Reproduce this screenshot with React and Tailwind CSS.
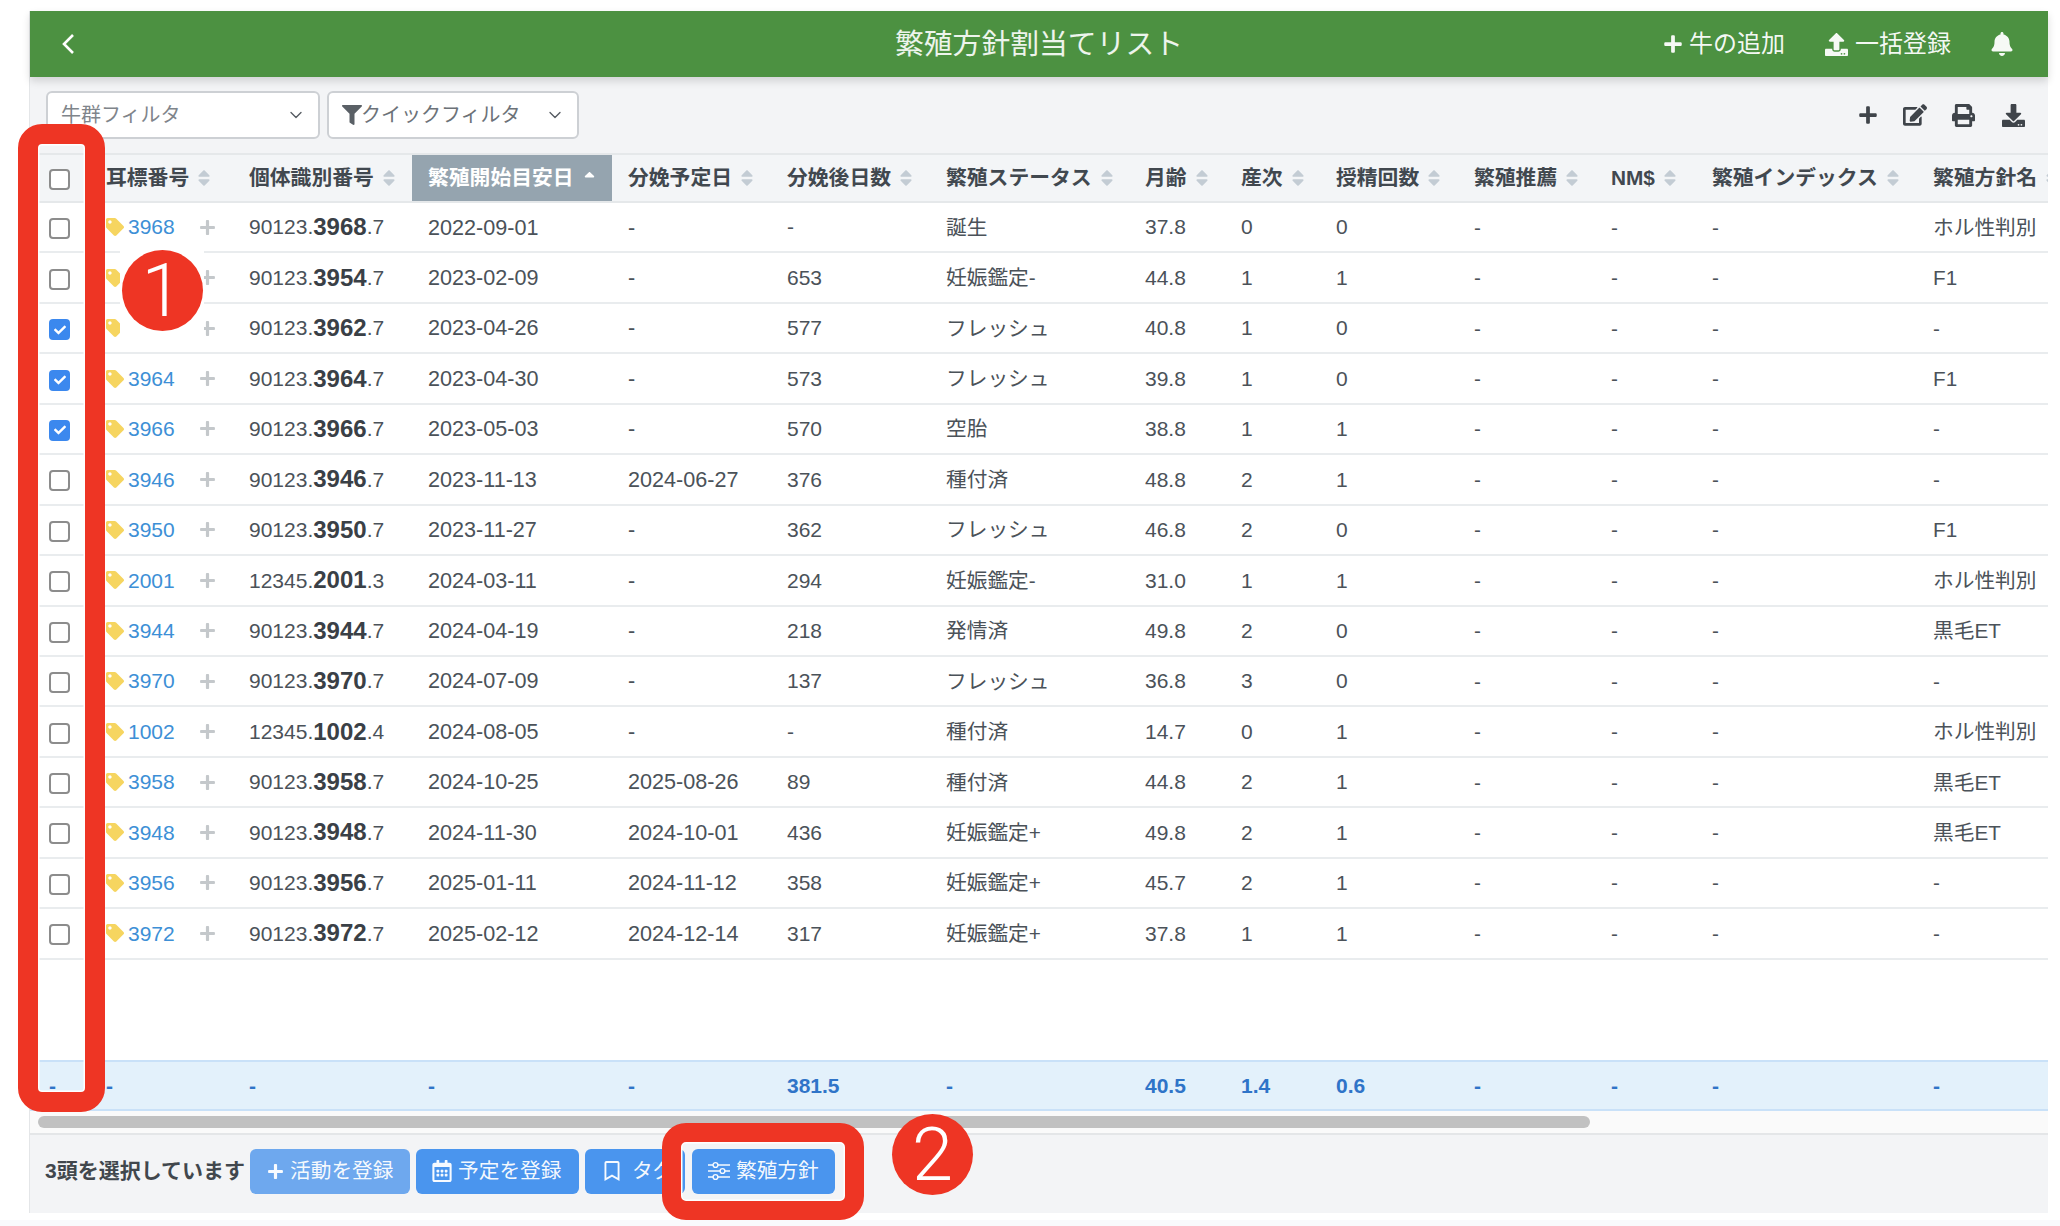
import { FaPlus, FaUpload, FaBell, FaFilter, FaEdit, FaPrint, FaDownload, FaTag, FaSort, FaSortUp, FaCheck, FaRegCalendarAlt, FaRegBookmark } from "react-icons/fa";
import { ChevronDown } from "lucide-react";

const cols = "grid grid-cols-[60px_143px_179px_200px_159px_159px_199px_96px_95px_138px_137px_101px_221px_183px] w-[2070px]";

const headers = ["耳標番号", "個体識別番号", "繁殖開始目安日", "分娩予定日", "分娩後日数", "繁殖ステータス", "月齢", "産次", "授精回数", "繁殖推薦", "NM$", "繁殖インデックス", "繁殖方針名"];

const cows = [
  ["3968", "90123", "7", "2022-09-01", "-", "-", "誕生", "37.8", "0", "0", "ホル性判別"],
  ["3954", "90123", "7", "2023-02-09", "-", "653", "妊娠鑑定-", "44.8", "1", "1", "F1"],
  ["3962", "90123", "7", "2023-04-26", "-", "577", "フレッシュ", "40.8", "1", "0", "-"],
  ["3964", "90123", "7", "2023-04-30", "-", "573", "フレッシュ", "39.8", "1", "0", "F1"],
  ["3966", "90123", "7", "2023-05-03", "-", "570", "空胎", "38.8", "1", "1", "-"],
  ["3946", "90123", "7", "2023-11-13", "2024-06-27", "376", "種付済", "48.8", "2", "1", "-"],
  ["3950", "90123", "7", "2023-11-27", "-", "362", "フレッシュ", "46.8", "2", "0", "F1"],
  ["2001", "12345", "3", "2024-03-11", "-", "294", "妊娠鑑定-", "31.0", "1", "1", "ホル性判別"],
  ["3944", "90123", "7", "2024-04-19", "-", "218", "発情済", "49.8", "2", "0", "黒毛ET"],
  ["3970", "90123", "7", "2024-07-09", "-", "137", "フレッシュ", "36.8", "3", "0", "-"],
  ["1002", "12345", "4", "2024-08-05", "-", "-", "種付済", "14.7", "0", "1", "ホル性判別"],
  ["3958", "90123", "7", "2024-10-25", "2025-08-26", "89", "種付済", "44.8", "2", "1", "黒毛ET"],
  ["3948", "90123", "7", "2024-11-30", "2024-10-01", "436", "妊娠鑑定+", "49.8", "2", "1", "黒毛ET"],
  ["3956", "90123", "7", "2025-01-11", "2024-11-12", "358", "妊娠鑑定+", "45.7", "2", "1", "-"],
  ["3972", "90123", "7", "2025-02-12", "2024-12-14", "317", "妊娠鑑定+", "37.8", "1", "1", "-"],
];

const totals = ["-", "-", "-", "-", "-", "381.5", "-", "40.5", "1.4", "0.6", "-", "-", "-", "-"];

function Check({ on }) {
  if (on) {
    return (
      <div className="w-[21px] h-[21px] rounded-[4px] bg-[#3b88ee] flex items-center justify-center text-white">
        <FaCheck size={12} />
      </div>
    );
  }
  return <div className="w-[21px] h-[21px] rounded-[4px] border-2 border-[#8c8c8c] bg-white"></div>;
}

function Sliders() {
  return (
    <svg width="22" height="20" viewBox="0 0 22 20" fill="none" stroke="currentColor" strokeWidth="1.4">
      <path d="M0 4h5M10 4h12M0 10h12M17 10h5M0 16h5M10 16h12" />
      <circle cx="7.5" cy="4" r="2.4" />
      <circle cx="14.5" cy="10" r="2.4" />
      <circle cx="7.5" cy="16" r="2.4" />
    </svg>
  );
}

function ActionButton({ icon, label, className }) {
  return (
    <button className={"h-[45px] rounded-[6px] flex items-center text-[20.7px] text-white/95 " + className}>
      {icon}
      {label}
    </button>
  );
}

export default function App() {
  return (
    <div className="relative h-screen w-full overflow-hidden bg-white flex flex-col font-['Liberation_Sans','Noto_Sans_CJK_JP',sans-serif] text-[20.7px] text-[#4b5259]">
      <div className="pt-[11px] pl-[29px] pr-[12px]">
        <div className="h-[1202px] flex flex-col border-l border-[#e4e6e8]">
          {/* Header */}
          <div className="relative z-10 h-[66px] shrink-0 bg-[#4c9141] text-white flex items-center shadow-[0_4px_8px_rgba(0,0,0,0.14)]">
            <svg className="ml-[31px]" width="14" height="22" viewBox="0 0 14 22" fill="none" stroke="currentColor" strokeWidth="2.6">
              <path d="M12 2 3 11l9 9" />
            </svg>
            <div className="flex-1 text-center text-[28.8px] text-white/90 pl-[340px] pt-[2px]">繁殖方針割当てリスト</div>
            <div className="flex items-center text-[24px] text-white/95">
              <FaPlus size={20} className="mr-[6px]" />
              牛の追加
              <FaUpload size={23} className="ml-[40px] mr-[7px]" />
              一括登録
              <FaBell size={24} className="ml-[39px] mr-[34px]" />
            </div>
          </div>

          {/* Filters */}
          <div className="h-[76px] shrink-0 bg-[#f3f4f6] flex items-center pl-[16px] pr-[23px]">
            <div className="w-[274px] h-[48px] bg-white border-2 border-[#cdd0d4] rounded-[6px] flex items-center justify-between pl-[13px] pr-[12px] text-[#7f858b] text-[20px]">
              牛群フィルタ
              <ChevronDown size={20} strokeWidth={1.6} className="text-[#555b61]" />
            </div>
            <div className="ml-[7px] w-[252px] h-[48px] bg-white border-2 border-[#cdd0d4] rounded-[6px] flex items-center pl-[13px] pr-[12px] text-[#6c7278] text-[20px]">
              <FaFilter size={20} className="text-[#5a6066] -mr-[1px]" />
              <span>クイックフィルタ</span>
              <ChevronDown size={20} strokeWidth={1.6} className="ml-auto text-[#555b61]" />
            </div>
            <div className="ml-auto flex items-center gap-[27px] text-[#3f444a]">
              <FaPlus size={20} className="-mr-[2px]" />
              <FaEdit size={24} className="-mr-[2px]" />
              <FaPrint size={23} />
              <FaDownload size={23} />
            </div>
          </div>

          {/* Table */}
          <div className="h-[907px] shrink-0 bg-white overflow-hidden flex flex-col">
            <div className={cols + " h-[50px] shrink-0 bg-[#f3f5f7] border-t-2 border-b-2 border-[#e5e8ea] font-bold text-[20.8px] text-[#41484f]"}>
              <div className="flex items-center pl-[19px] pt-[3px]"><Check /></div>
              {headers.map((h, i) => (
                <div key={h} className={i === 2 ? "flex items-center pl-[16px] bg-[#95a4af] text-white" : "flex items-center pl-[16px]"}>
                  {h}
                  {i === 2 ? <FaSortUp size={17} className="ml-[7px] text-white" /> : <FaSort size={20} className="ml-[5px] text-[#c3ccd4]" />}
                </div>
              ))}
            </div>
            {cows.map((c, r) => (
              <div key={c[0]} className={cols + " h-[50.45px] shrink-0 border-b-2 border-[#e9ecee]"}>
                <div className="flex items-center pl-[19px] pt-[3px]"><Check on={r >= 2 && r <= 4} /></div>
                <div className="flex items-center pl-[16px]">
                  <FaTag size={18} className="text-[#f6d560] shrink-0" />
                  <span className="ml-[4px] w-[72px] text-[21px] text-[#3d8fd6]">{c[0]}</span>
                  <FaPlus size={17} className="-ml-[1px] text-[#c4c8cb]" />
                </div>
                <div className="flex items-center pl-[16px] whitespace-nowrap text-[21px]">
                  {c[1]}.<b className="text-[24px] text-[#3a4046]">{c[0]}</b>.{c[2]}
                </div>
                <div className="flex items-center pl-[16px] pt-[1px] text-[21.6px]">{c[3]}</div>
                <div className="flex items-center pl-[16px] pt-[1px] text-[21.6px]">{c[4]}</div>
                <div className="flex items-center pl-[16px] text-[21px]">{c[5]}</div>
                <div className="flex items-center pl-[16px]">{c[6]}</div>
                <div className="flex items-center pl-[16px] text-[21px]">{c[7]}</div>
                <div className="flex items-center pl-[16px] text-[21px]">{c[8]}</div>
                <div className="flex items-center pl-[16px] text-[21px]">{c[9]}</div>
                <div className="flex items-center pl-[16px]">-</div>
                <div className="flex items-center pl-[16px]">-</div>
                <div className="flex items-center pl-[16px]">-</div>
                <div className="flex items-center pl-[16px] whitespace-nowrap">{c[10]}</div>
              </div>
            ))}
          </div>

          {/* Totals */}
          <div className="h-[51px] shrink-0 overflow-hidden bg-[#e3f1fb] border-t-2 border-b-2 border-[#c9e1f8]">
            <div className={cols + " h-full font-bold text-[21px] text-[#2f74c8]"}>
              {totals.map((t, i) => (
                <div key={i} className={i === 0 ? "flex items-center pl-[19px]" : "flex items-center pl-[16px]"}>{t}</div>
              ))}
            </div>
          </div>

          {/* Scrollbar */}
          <div className="h-[22px] shrink-0 bg-[#fafafa] flex items-center pl-[8px]">
            <div className="w-[1552px] h-[12px] rounded-full bg-[#c1c1c1]"></div>
          </div>

          {/* Selection bar */}
          <div className="h-[80px] shrink-0 bg-[#f3f4f6] border-t-2 border-[#e4e6e8] flex items-center pl-[15px] pb-[6px]">
            <span className="w-[205px] shrink-0 font-bold text-[21px] text-[#41474d] whitespace-nowrap">3頭を選択しています</span>
            <ActionButton
              className="w-[160px] pl-[17px] bg-[#6ea8ee]"
              icon={<FaPlus size={17} className="mr-[6px]" />}
              label="活動を登録"
            />
            <ActionButton
              className="ml-[6px] w-[163px] pl-[15px] bg-[#4a95ee]"
              icon={<FaRegCalendarAlt size={22} className="mr-[5px]" />}
              label="予定を登録"
            />
            <ActionButton
              className="ml-[6px] w-[100px] pl-[17px] bg-[#4a95ee]"
              icon={<FaRegBookmark size={20} className="mr-[10px]" />}
              label="タグ"
            />
            <ActionButton
              className="ml-[7px] w-[143px] pl-[16px] bg-[#4a95ee]"
              icon={<span className="mr-[6px]"><Sliders /></span>}
              label="繁殖方針"
            />
          </div>
        </div>
      </div>
      <div className="flex-1 mt-[7px] bg-[#f9fafc]"></div>

      {/* Annotations */}
      <div className="absolute left-[18px] top-[124px] w-[87px] h-[988px] border-[20px] border-[#ee3524] rounded-[24px] shadow-[inset_0_0_0_1.5px_#ffffff]"></div>
      <div className="absolute left-[120px] top-[249px] w-[84px] h-[97px] bg-white flex justify-center">
        <div className="w-[81px] h-[81px] mt-[1px] rounded-full bg-[#ee3524] flex items-center justify-center text-white text-[74px] font-light leading-none font-['Roboto',sans-serif]">1</div>
      </div>
      <div className="absolute left-[662px] top-[1123px] w-[202px] h-[97px] border-[19px] border-[#ee3524] rounded-[24px] shadow-[inset_0_0_0_1.5px_#ffffff]"></div>
      <div className="absolute left-[892px] top-[1114px] w-[81px] h-[81px] rounded-full bg-[#ee3524] flex items-center justify-center text-white text-[74px] font-light leading-none font-['Roboto',sans-serif]">2</div>
    </div>
  );
}
